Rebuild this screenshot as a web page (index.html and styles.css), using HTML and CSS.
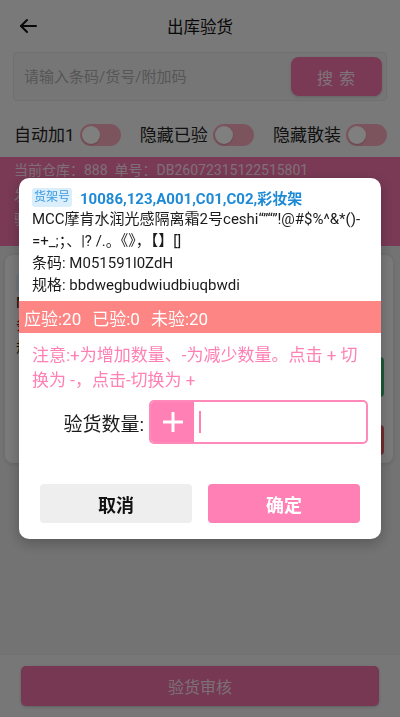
FILE: index.html
```html
<!DOCTYPE html>
<html lang="zh-CN">
<head>
<meta charset="utf-8">
<meta name="viewport" content="width=device-width, initial-scale=1">
<title>出库验货</title>
<link rel="stylesheet" href="styles.css">
</head>
<body>
<div class="page">
  <div class="top">
    <header class="topbar">
      <svg class="back" width="18" height="16" viewBox="0 0 18 16" fill="none" stroke="#111" stroke-width="2" stroke-linecap="round" stroke-linejoin="round">
        <path d="M17 8H2"/>
        <path d="M8 2L2 8l6 6"/>
      </svg>
      <h1 class="title">出库验货</h1>
      <span></span>
    </header>
    <div class="search">
      <input class="search-input" type="text" placeholder="请输入条码/货号/附加码">
      <button class="search-btn" type="button">搜 索</button>
    </div>
    <div class="switches">
      <div class="switch-item"><span class="switch-label">自动加1</span><span class="switch"><span class="knob"></span></span></div>
      <div class="switch-item"><span class="switch-label">隐藏已验</span><span class="switch"><span class="knob"></span></span></div>
      <div class="switch-item"><span class="switch-label">隐藏散装</span><span class="switch"><span class="knob"></span></span></div>
    </div>
  </div>

  <section class="order-info">
    <p>当前仓库：888&nbsp;&nbsp;单号：DB26072315122515801</p>
    <p>发货仓库：888&nbsp;&nbsp;客户：零售客户</p>
    <p>验货进度：0/20</p>
  </section>

  <div class="list">
    <div class="item-card">
      <div class="item-main">
        <span class="item-tag">货架号</span>
        <p class="item-text">MCC摩肯水润光感隔离霜2号</p>
        <p class="item-text">条码: M051591l0ZdH</p>
        <p class="item-text">规格: bbdwegbudwiudbiuqbwdi</p>
      </div>
      <div class="item-ops">
        <span class="op op-add"></span>
        <span class="op op-del"></span>
      </div>
    </div>
  </div>

  <footer class="bottom-bar">
    <button class="audit-btn" type="button">验货审核</button>
  </footer>
</div>

<div class="mask">
  <div class="dialog">
    <div class="goods">
      <div class="shelf-row">
        <span class="shelf-tag">货架号</span>
        <span class="shelf-code">10086,123,A001,C01,C02,彩妆架</span>
      </div>
      <p class="goods-name">MCC摩肯水润光感隔离霜2号ceshi“”“”!@#$%^&amp;*()-=+_;；、|? /.。《》，【】[]</p>
      <p class="goods-meta">条码: M051591l0ZdH</p>
      <p class="goods-meta">规格: bbdwegbudwiudbiuqbwdi</p>
    </div>
    <div class="count-bar">
      <span>应验:20</span>
      <span>已验:0</span>
      <span>未验:20</span>
    </div>
    <p class="tip">注意:+为增加数量、-为减少数量。点击 + 切换为 -，点击-切换为 +</p>
    <div class="qty-row">
      <span class="qty-label">验货数量:</span>
      <div class="qty-box">
        <span class="sign">
          <svg width="20" height="20" viewBox="0 0 20 20" stroke="#fff" stroke-width="3">
            <path d="M10 0v20M0 10h20"/>
          </svg>
        </span>
        <span class="qty-field"><span class="caret"></span></span>
      </div>
    </div>
    <div class="actions">
      <button class="btn btn-cancel" type="button">取消</button>
      <button class="btn btn-ok" type="button">确定</button>
    </div>
  </div>
</div>
</body>
</html>
```

FILE: styles.css
```css
* {
  box-sizing: border-box;
}

html,
body {
  margin: 0;
  height: 100%;
}

body {
  font-family: Roboto, "Noto Sans CJK SC", sans-serif;
  background: #e6e6e6;
  color: #222;
}

.page {
  min-height: 100vh;
  display: flex;
  flex-direction: column;
}

/* header, search and switches */
.top {
  background: #f3f3f3;
}

.topbar {
  height: 52px;
  display: grid;
  grid-template-columns: 60px 1fr 60px;
  align-items: center;
}

.back {
  margin-left: 19px;
}

.title {
  margin: 0;
  text-align: center;
  font-size: 16.5px;
  font-weight: 400;
  color: #111;
}

.search {
  margin: 0 13px;
  height: 49px;
  display: flex;
  align-items: center;
  padding: 0 4px 0 10px;
  background: #ececec;
  border: 1px solid #e0e0e0;
  border-radius: 4px;
}

.search-input {
  flex: 1;
  min-width: 0;
  border: none;
  outline: none;
  background: transparent;
  font-family: inherit;
  font-size: 15px;
  padding: 0;
}

.search-input::placeholder {
  color: #adadad;
}

.search-btn {
  width: 91px;
  height: 39px;
  border: none;
  border-radius: 8px;
  background: #f474ac;
  color: rgba(255, 255, 255, 0.85);
  font-family: inherit;
  font-size: 16px;
  letter-spacing: 1px;
  box-shadow: 0 1px 3px rgba(0, 0, 0, 0.15);
}

.switches {
  display: flex;
  justify-content: space-between;
  padding: 23px 13px 11px 14px;
}

.switch-item {
  display: flex;
  align-items: center;
  gap: 5px;
}

.switch-label {
  font-size: 17px;
  line-height: 22px;
  color: #222;
}

.switch {
  width: 41px;
  height: 22px;
  border-radius: 11px;
  background: #f9a9bb;
  padding: 2px;
  display: flex;
}

.knob {
  width: 18px;
  height: 18px;
  border-radius: 50%;
  background: #fff;
  box-shadow: 0 1px 2px rgba(0, 0, 0, 0.2);
}

/* order summary band */
.order-info {
  background: #f474ac;
  height: 89px;
  padding: 1px 14px 0;
  color: rgba(255, 255, 255, 0.8);
  font-size: 14px;
}

.order-info p {
  margin: 0;
  line-height: 24.5px;
  white-space: nowrap;
}

/* goods list */
.list {
  padding: 9px 7px 0 5px;
}

.item-card {
  height: 208px;
  background: #f5f5f5;
  border-radius: 8px;
  box-shadow: 0 1px 4px rgba(0, 0, 0, 0.12);
  padding: 17px 9px 0 11px;
  display: flex;
  justify-content: space-between;
}

.item-tag {
  display: inline-block;
  font-size: 12px;
  line-height: 18px;
  padding: 0 3px;
  border-radius: 3px;
  background: #dbeefb;
  color: #3a9be0;
}

.item-text {
  margin: 0;
  font-size: 14px;
  line-height: 22px;
}

.item-ops {
  display: flex;
  flex-direction: column;
  gap: 28px;
  padding-top: 85px;
}

.op {
  display: block;
  width: 50px;
  border-radius: 4px;
}

.op-add {
  height: 40px;
  background: #3cb371;
}

.op-del {
  height: 30px;
  background: #e25a5a;
}

/* bottom action */
.bottom-bar {
  margin-top: auto;
  height: 63px;
  background: #eeeeee;
  border-top: 1px solid #e2e2e2;
  padding: 11px 21px 11px;
}

.audit-btn {
  width: 100%;
  height: 40px;
  border: none;
  border-radius: 5px;
  background: #ec70a6;
  color: rgba(255, 255, 255, 0.8);
  font-family: inherit;
  font-size: 16px;
  box-shadow: 0 1px 3px rgba(0, 0, 0, 0.2);
}

/* dialog */
.mask {
  position: fixed;
  inset: 0;
  background: rgba(0, 0, 0, 0.5);
  display: flex;
  align-items: center;
  justify-content: center;
}

.dialog {
  width: 362px;
  background: #fff;
  border-radius: 10px;
  overflow: hidden;
  padding: 8px 0 16px;
  box-shadow: 0 4px 14px rgba(0, 0, 0, 0.25);
}

.goods {
  padding: 0 13px;
}

.shelf-row {
  display: flex;
  align-items: center;
  height: 22px;
}

.shelf-tag {
  height: 19px;
  line-height: 19px;
  padding: 0 2px;
  border-radius: 3px;
  background: #dbeefb;
  color: #3a9be0;
  font-size: 12px;
}

.shelf-code {
  margin-left: 8px;
  font-size: 15px;
  font-weight: 700;
  color: #1e8ad6;
}

.goods-name,
.goods-meta {
  margin: 0;
  font-size: 15px;
  line-height: 22px;
  color: #1a1a1a;
}

.count-bar {
  margin-top: 5px;
  height: 32px;
  background: #fd8583;
  color: #fff;
  font-size: 17px;
  display: flex;
  align-items: center;
  gap: 11px;
  padding-left: 5px;
}

.tip {
  margin: 10px 0 0;
  padding: 0 13px;
  color: #ff80b4;
  font-size: 17px;
  line-height: 25px;
}

.qty-row {
  margin-top: 7px;
  padding: 0 13px;
  display: flex;
  align-items: center;
}

.qty-label {
  width: 112px;
  margin-right: 5px;
  text-align: right;
  font-size: 19px;
  color: #1a1a1a;
}

.qty-box {
  flex: 1;
  height: 44px;
  display: flex;
  border: 2px solid #ff8ab9;
  border-radius: 5px;
  overflow: hidden;
}

.sign {
  width: 43px;
  background: #ff80b4;
  display: flex;
  align-items: center;
  justify-content: center;
}

.qty-field {
  flex: 1;
  display: flex;
  align-items: center;
  padding-left: 5px;
}

.caret {
  width: 2px;
  height: 22px;
  background: #ff80b4;
}

.actions {
  margin-top: 40px;
  padding: 0 21px;
  display: flex;
  gap: 16px;
}

.btn {
  flex: 1;
  height: 39px;
  border: none;
  border-radius: 4px;
  font-family: inherit;
  font-size: 18px;
  font-weight: 700;
}

.btn-cancel {
  background: #eeeeee;
  color: #111;
}

.btn-ok {
  background: #ff80b4;
  color: #fff;
}
```
